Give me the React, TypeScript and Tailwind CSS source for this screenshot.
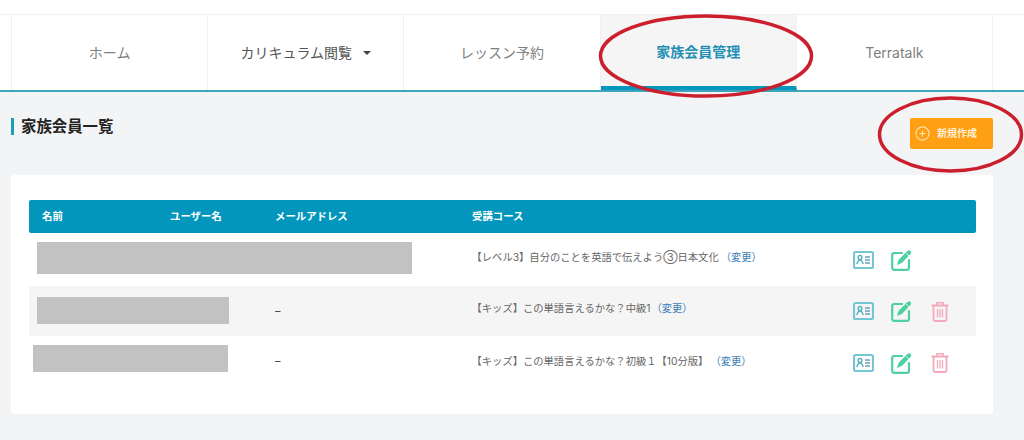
const font = "font-['Inter','Noto_Sans_CJK_JP',sans-serif]";

function CardIcon() {
  return (
    <svg width="21" height="20" viewBox="0 0 21 20" fill="none" stroke="#6cc5cf" strokeWidth="1.6">
      <rect x="1" y="2" width="19" height="16" rx="1.5" stroke="#74c6d2" strokeWidth="2.2" />
      <circle cx="7" cy="7.4" r="1.9" stroke="#4fb0bd" strokeWidth="1.3" />
      <path d="M3.8 14.2c.7-2.8 1.7-4.2 3.2-4.2s2.5 1.4 3.2 4.2" stroke="#4fb0bd" strokeWidth="1.3" />
      <path d="M12 7h5M12 10h5M12 13h5" stroke="#6d9fb8" strokeWidth="1.3" />
    </svg>
  );
}

function EditIcon() {
  return (
    <svg width="22" height="22" viewBox="0 0 22 22" fill="none">
      <path d="M11 4H3.2C2 4 1.2 4.8 1.2 6v12.8c0 1.2.8 2 2 2H16c1.2 0 2-.8 2-2V11" stroke="#4fd0a0" strokeWidth="2.2" strokeLinecap="round" />
      <path d="M6 16l1.6-5.2L16.4 2c.9-.9 2.2-.9 3.1 0s.9 2.2 0 3.1l-8.6 9z" fill="#4fd0a0" />
      <path d="M15.3 4.3l2.9 2.9" stroke="#ffffff" strokeWidth="0.8" />
    </svg>
  );
}

function TrashIcon() {
  return (
    <svg width="20" height="21" viewBox="0 0 20 21" fill="none" stroke="#f2a9bb" strokeWidth="1.6">
      <path d="M1.5 4.5h17" strokeWidth="2" />
      <path d="M7 4V1.8h6V4" />
      <path d="M3.5 4.5v14c0 .9.6 1.5 1.5 1.5h10c.9 0 1.5-.6 1.5-1.5v-14" strokeWidth="1.8" />
      <path d="M7.5 8v8.5M10 8v8.5M12.5 8v8.5" strokeWidth="1.3" />
    </svg>
  );
}

function PlusIcon() {
  return (
    <svg width="15" height="15" viewBox="0 0 15 15" fill="none" stroke="#ffe2ad" strokeWidth="1.2">
      <circle cx="7.5" cy="7.5" r="6.6" />
      <path d="M4.5 7.5h6M7.5 4.5v6" />
    </svg>
  );
}

function Tab({ label, active, caret }: { label: string; active?: boolean; caret?: boolean }) {
  return (
    <div
      className={
        "w-[196.2px] h-full flex items-center justify-center border-r border-[#f0f0f0] text-[14px] " +
        (active
          ? "bg-[#f5f5f5] text-[#1f8fb3] font-bold border-b-4 border-b-[#0497bd] pt-0.5"
          : caret
            ? "text-[#555555]"
            : "text-[#808080]")
      }
    >
      <span>{label}</span>
      {caret && <span className="ml-[11px] mt-px w-0 h-0 border-x-[4px] border-x-transparent border-t-[4px] border-t-[#444444]" />}
    </div>
  );
}

function Row({
  email,
  course,
  trash,
  shade,
  height,
  gap,
  textShift,
  iconShift,
}: {
  email?: string;
  course: string;
  trash?: boolean;
  shade?: boolean;
  height: string;
  gap: string;
  textShift: string;
  iconShift?: string;
}) {
  return (
    <div className={"flex items-center text-[10.3px] text-[#666666] " + height + (shade ? " bg-[#f5f5f5]" : " bg-white")}>
      <div className="w-[246.5px] shrink-0" />
      <div className="w-[196.5px] shrink-0 text-[11px] text-[#444444]">{email}</div>
      <div className={"w-[381.5px] shrink-0 flex " + textShift}>
        <span>{course}</span>
        <span className={"text-[#3d7fb5] " + gap}>（変更）</span>
      </div>
      <div className={"flex items-center gap-[17px] " + (iconShift ?? "")}>
        <CardIcon />
        <EditIcon />
        {trash && <TrashIcon />}
      </div>
    </div>
  );
}

export default function App() {
  return (
    <div className={"relative w-[1024px] h-[440px] overflow-hidden bg-[#f2f4f6] " + font}>
      <div className="h-[14px] bg-white border-b border-[#f0f0f0] box-content" />
      <nav className="h-[75px] bg-white border-b-2 border-[#3ea5bd] flex pl-[12px] box-content">
        <div className="flex h-[75px] border-l border-[#f0f0f0] -ml-px">
          <Tab label="ホーム" />
          <Tab label="カリキュラム閲覧" caret />
          <Tab label="レッスン予約" />
          <Tab label="家族会員管理" active />
          <Tab label="Terratalk" />
        </div>
      </nav>

      <div className="flex justify-between pl-[11px] pr-[31px] pt-[26px] h-[83px]">
        <h1 className="h-[17px] border-l-[3px] border-[#1d9fb8] pl-[7px] text-[15.4px] leading-[17px] font-bold text-[#222222]">家族会員一覧</h1>
        <button className="w-[83px] h-[31px] bg-[#ff9f13] rounded-[2px] flex items-center pl-[5px] gap-[7px] text-[10px] font-bold text-[#fff0d6]">
          <PlusIcon />
          新規作成
        </button>
      </div>

      <section className="mx-[11px] w-[982px] h-[239px] bg-white rounded-[3px] px-[17.5px] pt-[25px]">
        <div className="h-[33px] bg-[#0396bd] rounded-[2px] flex items-center text-[10.4px] font-bold text-white">
          <span className="ml-[13.5px] w-[128px]">名前</span>
          <span className="w-[105px]">ユーザー名</span>
          <span className="w-[197px]">メールアドレス</span>
          <span>受講コース</span>
        </div>
        <Row height="h-[53px]" gap="ml-[2px]" textShift="-mt-[4px]" course="【レベル3】自分のことを英語で伝えよう③日本文化" />
        <Row height="h-[50px]" gap="ml-[1px]" textShift="-mt-[4px]" shade email="–" trash course="【キッズ】この単語言えるかな？中級1" />
        <Row height="h-[51px]" gap="ml-[2px]" textShift="mt-0" email="–" trash iconShift="mt-[2px]" course="【キッズ】この単語言えるかな？初級１【10分版】" />
      </section>

      {/* Redaction blocks laid over the table */}
      <div className="absolute left-[37px] top-[242px] w-[374.5px] h-[31.5px] bg-[#c2c2c2]" />
      <div className="absolute left-[37px] top-[297px] w-[192px] h-[27px] bg-[#c2c2c2]" />
      <div className="absolute left-[32.5px] top-[345px] w-[195.5px] h-[27px] bg-[#c2c2c2]" />

      {/* Hand-drawn annotation ellipses */}
      <svg className="absolute inset-0 pointer-events-none" width="1024" height="440" fill="none" stroke="#cc1f2e" strokeWidth="3.5">
        <ellipse cx="706" cy="56" rx="105.5" ry="40" />
        <ellipse cx="950.5" cy="134.5" rx="71" ry="36.5" />
      </svg>
    </div>
  );
}
